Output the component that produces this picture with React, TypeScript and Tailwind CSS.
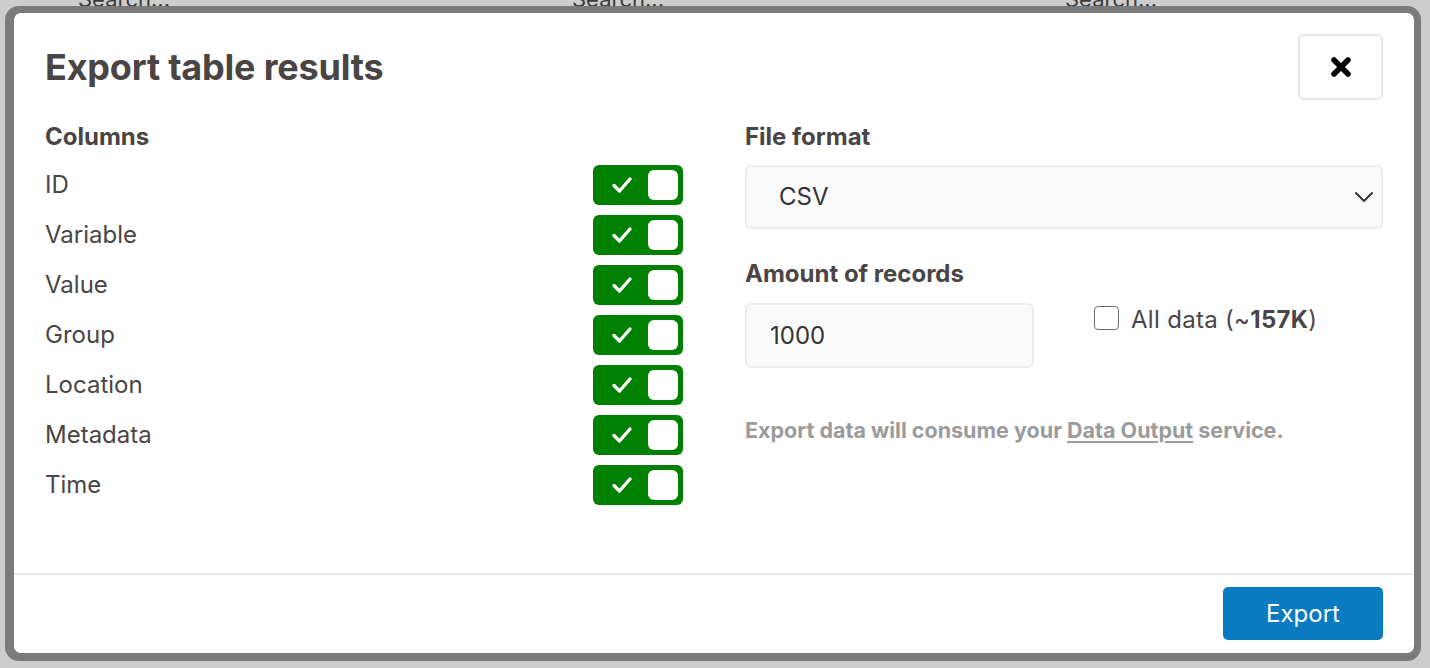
import { useState } from "react";

const columns = ["ID", "Variable", "Value", "Group", "Location", "Metadata", "Time"];

function Toggle() {
  return (
    <div className="flex h-[40px] w-[90px] items-center rounded-[6px] bg-[#008000] pr-[5px]">
      <div className="flex flex-1 items-center justify-center pl-[3px]">
        <svg width="22" height="18" viewBox="0 0 22 18" fill="none">
          <path d="M3 9.5 L8.5 15 L19 3" stroke="white" strokeWidth="3.4" strokeLinecap="round" strokeLinejoin="round" />
        </svg>
      </div>
      <div className="h-[30px] w-[30px] rounded-[6px] bg-white" />
    </div>
  );
}

export default function App() {
  const [amount, setAmount] = useState("1000");

  return (
    <div className="relative h-[668px] w-[1430px] overflow-hidden bg-[#cdcdcd] font-['Inter',sans-serif] text-[#4a4545]">
      {/* page behind the overlay, only the top edge shows */}
      <div className="absolute left-0 top-[-17px] flex w-full text-[22px] text-[#3b3b3b]">
        <span className="pl-[78px] w-[527px]">Search...</span>
        <span className="pl-[45px] w-[508px]">Search...</span>
        <span className="pl-[30px]">Search...</span>
      </div>

      <div className="absolute bottom-[7px] left-[5px] right-[9px] top-[6px] rounded-[14px] bg-[#767676]/95 pb-[8px] pl-[9px] pr-[7px] pt-[7px]">
        <div className="flex h-full w-full flex-col rounded-[7px] bg-white">
          {/* header */}
          <div className="flex items-center justify-between px-[31px] pt-[21px]">
            <h1 className="text-[36px] font-bold tracking-[-0.2px]">Export table results</h1>
            <button className="flex h-[66px] w-[85px] items-center justify-center rounded-[6px] border-2 border-[#e6e6e6] bg-white">
              <svg width="22" height="22" viewBox="0 0 22 22">
                <path d="M4 4 L18 18 M18 4 L4 18" stroke="black" strokeWidth="5.5" strokeLinecap="round" />
              </svg>
            </button>
          </div>

          {/* body */}
          <div className="grid flex-1 grid-cols-2 gap-[62px] px-[31px] pt-[22px]">
            <div>
              <div className="mb-[13px] text-[24px] font-bold leading-[30px]">Columns</div>
              <div className="flex flex-col gap-[10px]">
                {columns.map((c) => (
                  <div key={c} className="flex items-center justify-between">
                    <span className="text-[24px]">{c}</span>
                    <Toggle />
                  </div>
                ))}
              </div>
            </div>

            <div>
              <div className="mb-[13px] text-[24px] font-bold leading-[30px]">File format</div>
              <div className="flex h-[64px] items-center justify-between rounded-[6px] border-2 border-[#ececec] bg-[#fafafa] pl-[32px] pr-[6px]">
                <span className="text-[24px] text-[#333]">CSV</span>
                <svg width="20" height="12" viewBox="0 0 20 12" fill="none" className="mr-[1px]">
                  <path d="M2 2 L10 10 L18 2" stroke="#333" strokeWidth="2" strokeLinecap="round" strokeLinejoin="round" />
                </svg>
              </div>

              <div className="mb-[14px] mt-[30px] text-[24px] font-bold leading-[30px]">Amount of records</div>
              <div className="grid grid-cols-2 gap-[60px]">
                <input
                  value={amount}
                  onChange={(e) => setAmount(e.target.value)}
                  className="h-[65px] w-full rounded-[6px] border-2 border-[#ececec] bg-[#fafafa] pl-[23px] text-[24px] text-[#333] outline-none"
                />
                <label className="flex items-start gap-[12px] pt-[2px]">
                  <span className="mt-[1px] h-[24px] w-[25px] rounded-[4px] border-[1.5px] border-[#6f6f6f] bg-white" />
                  <span className="text-[24px] leading-[30px] tracking-[0.3px]">
                    All data (~<b className="font-bold">157K</b>)
                  </span>
                </label>
              </div>

              <p className="mt-[50px] text-[21.5px] font-bold leading-[24px] text-[#9b9b9b]">
                Export data will consume your <span className="underline underline-offset-[3px]">Data Output</span> service.
              </p>
            </div>
          </div>

          {/* footer */}
          <div className="flex justify-end border-t-2 border-[#e8e8e8] px-[31px] pb-[13px] pt-[12px]">
            <button className="h-[53px] w-[160px] rounded-[5px] bg-[#0a7bc0] text-[24px] text-white">Export</button>
          </div>
        </div>
      </div>
    </div>
  );
}
